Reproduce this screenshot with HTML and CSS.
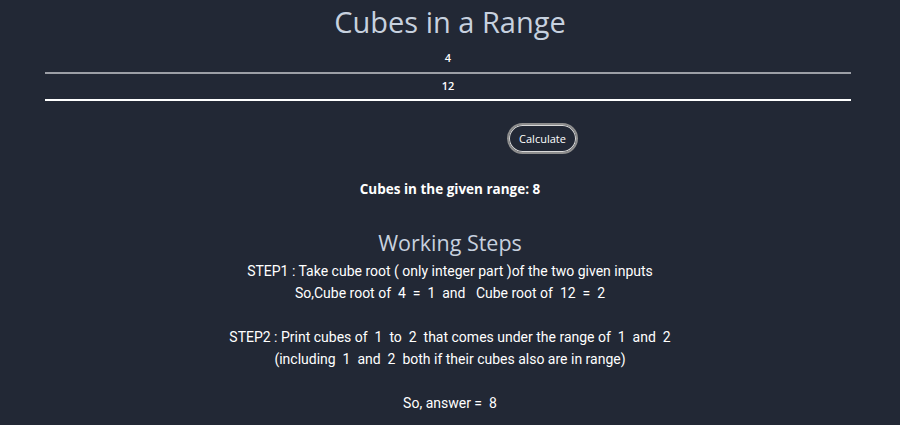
FILE: index.html
```html
<!DOCTYPE html>
<html>
<head>
<meta charset="utf-8">
<link rel="stylesheet" href="styles.css">
</head>
<body>
<div class="page">
  <h1 class="title">Cubes in a Range</h1>
  <div class="inputs">
    <div class="field field-first">4</div>
    <div class="field field-second">12</div>
  </div>
  <div class="btn-row"><button class="btn">Calculate</button></div>
  <p class="result">Cubes in the given range: 8</p>
  <h2 class="steps-title">Working Steps</h2>
  <div class="steps">
    <p class="line">STEP1 : Take cube root ( only integer part )of the two given inputs</p>
    <p class="line">So,Cube root of&nbsp; 4 &nbsp;= &nbsp;1 &nbsp;and &nbsp; Cube root of&nbsp; 12 &nbsp;= &nbsp;2</p>
    <p class="line gap"></p>
    <p class="line">STEP2 : Print cubes of&nbsp; 1 &nbsp;to&nbsp; 2 &nbsp;that comes under the range of&nbsp; 1 &nbsp;and&nbsp; 2</p>
    <p class="line">(including&nbsp; 1 &nbsp;and&nbsp; 2 &nbsp;both if their cubes also are in range)</p>
    <p class="line gap"></p>
    <p class="line">So, answer = &nbsp;8</p>
  </div>
</div>
</body>
</html>
```

FILE: styles.css
```css
html, body {
  margin: 0;
  padding: 0;
  background: #222835;
}
.page {
  width: 900px;
  height: 425px;
  overflow: hidden;
  color: #ffffff;
  font-family: "Open Sans", sans-serif;
}
.title {
  margin: 0;
  padding-top: 4px;
  height: 40px;
  line-height: 36px;
  text-align: center;
  font-family: "Open Sans", sans-serif;
  font-weight: 400;
  font-size: 29px;
  color: #c7d1df;
}
.inputs {
  display: flex;
  flex-direction: column;
  width: 806px;
  margin-left: 45px;
}
.field {
  text-align: center;
  font-family: "Open Sans", sans-serif;
  font-weight: 600;
  font-size: 11px;
  color: #ffffff;
}
.field-first {
  height: 28px;
  line-height: 28px;
  border-bottom: 2px solid #9c9fa6;
}
.field-second {
  height: 25px;
  line-height: 24px;
  border-bottom: 2px solid #ffffff;
}
.btn-row {
  display: flex;
  padding-top: 22px;
  padding-left: 507px;
}
.btn {
  width: 71px;
  height: 31px;
  border-radius: 16px;
  border: 2px solid #8e8e8e;
  box-shadow: inset 0 0 0 1px #d8d8d8;
  background: #222835;
  color: #ffffff;
  font-family: "Open Sans", sans-serif;
  font-size: 11px;
  padding: 0;
}
.result {
  margin: 0;
  padding-top: 24px;
  line-height: 22px;
  text-align: center;
  font-weight: 700;
  font-size: 13.5px;
  font-family: "Open Sans", sans-serif;
}
.steps-title {
  margin: 0;
  padding-top: 28px;
  line-height: 30px;
  text-align: center;
  font-weight: 400;
  font-size: 21.5px;
  color: #c7d1df;
  font-family: "Open Sans", sans-serif;
}
.steps {
  display: flex;
  flex-direction: column;
  padding-top: 2px;
}
.line {
  margin: 0;
  height: 22px;
  line-height: 22px;
  text-align: center;
  font-family: "Roboto", sans-serif;
  font-size: 14px;
  letter-spacing: 0;
}
```
